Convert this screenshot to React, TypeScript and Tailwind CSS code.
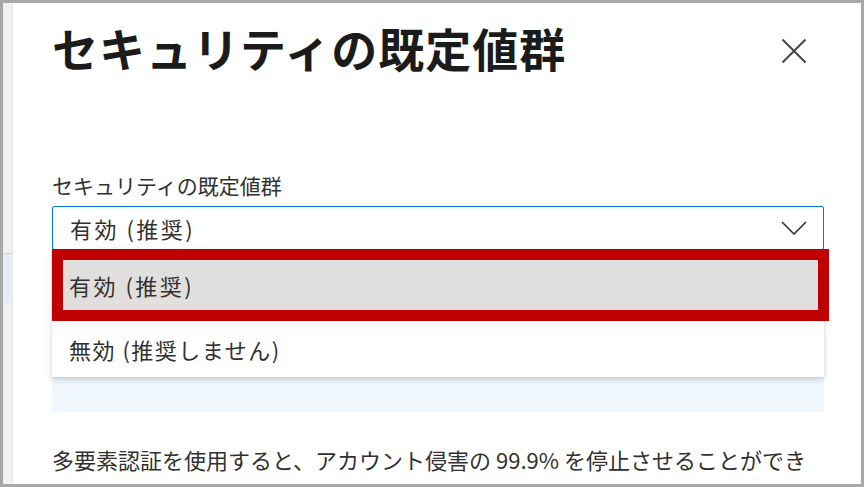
import React from "react";

const font = { fontFamily: '"Noto Sans CJK JP", "Noto Sans", sans-serif' };

export default function App() {
  return (
    <div
      className="w-[864px] h-[487px] border-[3px] border-[#a8a8a8] bg-white flex overflow-hidden text-[#323130]"
      style={font}
    >
      <div className="w-[10px] shrink-0 flex flex-col bg-[#f1f1f1] border-r border-[#e6e6e6]">
        <div className="h-[250px]" />
        <div className="h-px bg-[#d2d2d2]" />
        <div className="h-[49px] bg-[#e8edf5]" />
      </div>
      <div className="flex-1 min-w-0 overflow-hidden pl-[39px] pr-[37px] flex flex-col">
        <div className="pt-[21px] flex justify-between items-start">
          <h1 className="text-[46px] leading-[46px] font-bold tracking-[1px] text-[#1b1b1b] whitespace-nowrap">
            セキュリティの既定値群
          </h1>
          <div className="mt-[13px] mr-[16px] w-[28px] h-[28px] flex items-center justify-center">
            <svg width="26" height="26" viewBox="0 0 26 26">
              <path d="M1.5 1.5 L24.5 24.5 M24.5 1.5 L1.5 24.5" stroke="#444" strokeWidth="1.9" fill="none" />
            </svg>
          </div>
        </div>
        <div className="mt-[101px] text-[21px] leading-[28px] whitespace-nowrap">セキュリティの既定値群</div>
        <div className="relative mt-[7px]">
          <div className="h-[44px] border border-[#0078d4] rounded-[2px] pl-[17px] pr-[16px] flex items-center justify-between">
            <span className="text-[22px] leading-[28px] tracking-[2.5px] whitespace-nowrap">有効 (推奨)</span>
            <svg width="26" height="14" viewBox="0 0 26 14">
              <path d="M1 1 L13 13 L25 1" stroke="#323130" strokeWidth="1.6" fill="none" />
            </svg>
          </div>
          <div className="absolute top-[43px] left-0 right-0 bg-white z-10 shadow-[0_3px_7px_rgba(0,0,0,0.13),0_1px_2px_rgba(0,0,0,0.1)]">
            <div className="h-[64px] bg-[#e1dfdd] pl-[17px] pt-[8px] flex items-center">
              <span className="text-[22px] leading-[28px] tracking-[2.5px] whitespace-nowrap">有効 (推奨)</span>
            </div>
            <div className="h-[64px] pl-[17px] pt-[8px] flex items-center">
              <span className="text-[22px] leading-[28px] tracking-[1.5px] whitespace-nowrap">無効 (推奨しません)</span>
            </div>
            <div className="absolute top-0 left-0 w-[777px] h-[72px] border-[11px] border-[#c00000] pointer-events-none" />
          </div>
        </div>
        <div className="mt-[20px] h-[142px] shrink-0 bg-[#eff6fc]" />
        <div className="mt-[30px] text-[22px] leading-[34px] whitespace-nowrap">
          多要素認証を使用すると、アカウント侵害の 99.9% を停止させることができ
        </div>
      </div>
    </div>
  );
}
